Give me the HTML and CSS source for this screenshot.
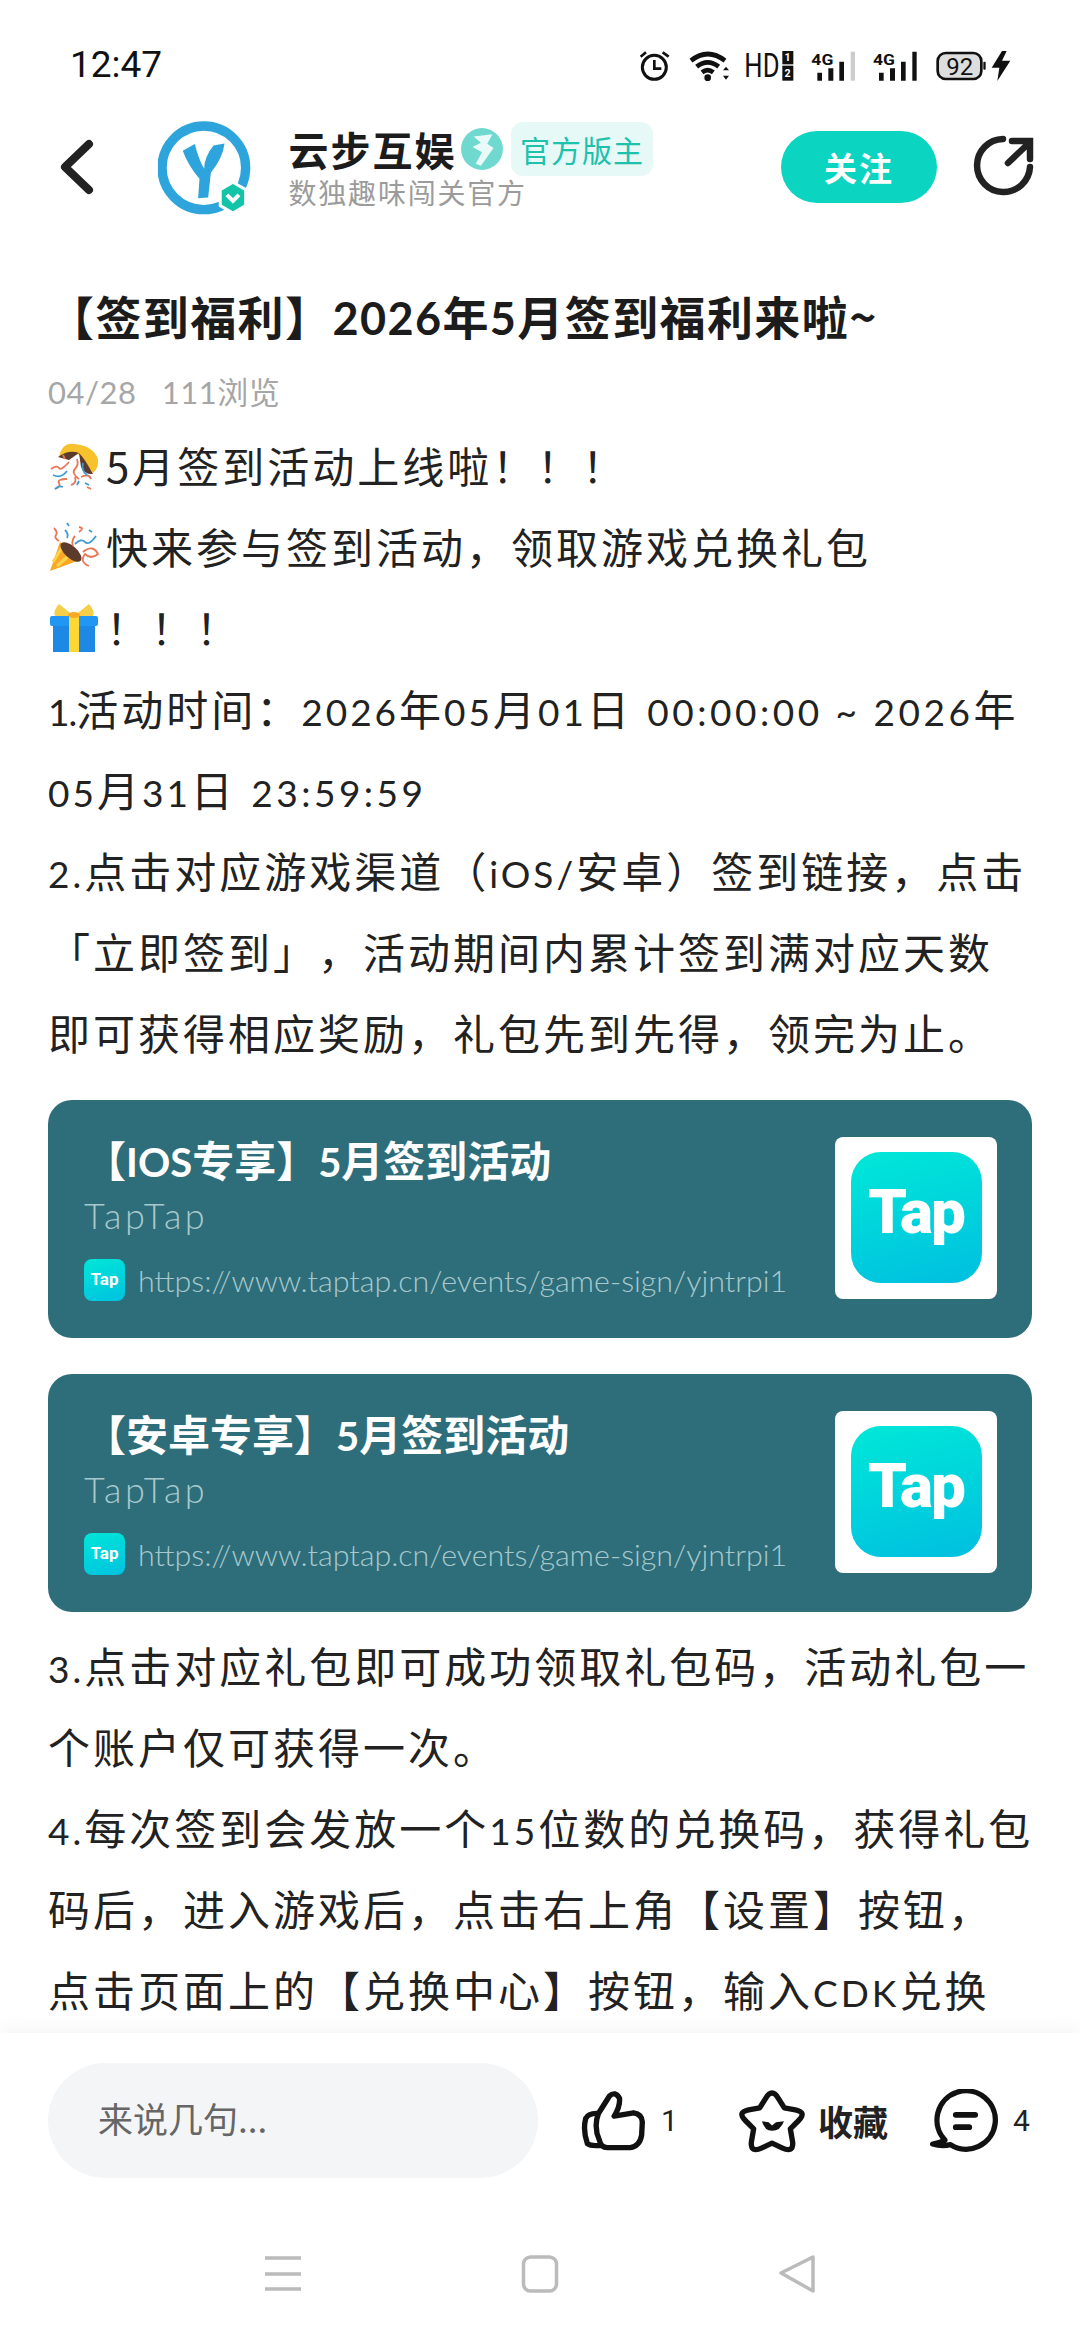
FILE: index.html
```html
<!DOCTYPE html>
<html lang="zh-CN">

<head>
    <meta charset="utf-8">
    <title>云步互娱</title>
    <link rel="stylesheet" href="styles.css">
</head>

<body>
    <div class="page">
        <!-- status bar -->
        <div class="status_bar">
            <span class="time">12:47</span>
            <svg class="status_icons" width="420" height="70" viewBox="0 0 1260 210">
                <circle cx="103" cy="112" r="36" fill="none" stroke="#111" stroke-width="9" />
                <path d="M103 90V116H124M62 80L78 67M128 67L146 80" fill="none" stroke="#111" stroke-width="8" />
                <path d="M213 92Q263 52 315 92M230 110Q263 84 296 110M246 127Q263 114 280 127" fill="none" stroke="#111" stroke-width="14" />
                <circle cx="263" cy="143" r="10" fill="#111" />
                <path d="M309 121L318 110L327 121ZM309 137L318 149L327 137Z" fill="#111" />
                <text class="st_hd" transform="translate(373 140) scale(0.77 1)">HD</text>
                <rect x="487" y="63" width="33" height="40" fill="#111" />
                <rect x="487" y="107" width="33" height="45" fill="#111" />
                <text class="st_sim" x="503" y="94">1</text>
                <text class="st_sim" x="503" y="142">2</text>
                <text class="st_net" x="574" y="106" textLength="66" lengthAdjust="spacingAndGlyphs">4G</text>
                <path d="M592 128h14v24h-14zM625 115h15v37h-15zM658 95h14v57h-14z" fill="#111" />
                <rect x="692" y="65" width="13" height="87" fill="#ccc" />
                <text class="st_net" x="759" y="106" textLength="66" lengthAdjust="spacingAndGlyphs">4G</text>
                <path d="M777 128h14v24h-14zM810 115h15v37h-15zM843 95h14v57h-14zM877 65h13v87h-13z" fill="#111" />
                <rect x="953" y="69" width="131" height="78" rx="24" fill="#ddd" stroke="#111" stroke-width="8" />
                <rect x="1090" y="95" width="7" height="24" rx="3" fill="#111" />
                <text class="st_batt" x="1019" y="134">92</text>
                <path d="M1146 63L1115 113H1138L1132 153L1171 92H1146L1160 63Z" fill="#111" />
            </svg>
        </div>

        <!-- header -->
        <div class="top_bar">
            <svg class="back_icon" width="34" height="56" viewBox="0 0 34 56">
                <path d="M29 5L5 28L29 51" fill="none" stroke="#222" stroke-width="8" stroke-linecap="round" stroke-linejoin="round" />
            </svg>
            <svg class="avatar" width="93" height="95" viewBox="48 60 278 284">
                <circle cx="185" cy="203" r="125" fill="none" stroke="#2ea4dc" stroke-width="28" />
                <path d="M122 152L158 132Q170 180 186 206Q186 170 214 136L247 130Q242 172 206 218L198 292L168 294L172 236Q138 196 122 152Z" fill="#2ea4dc" />
                <path d="M272 246L310 268V316L272 338L234 316V268Z" fill="#14c4a8" stroke="#fff" stroke-width="9" stroke-linejoin="round" />
                <path d="M254 284L272 302L290 284" fill="none" stroke="#fff" stroke-width="12" />
            </svg>
            <div class="author">
                <div class="author_line">
                    <span class="author_name">云步互娱</span>
                    <svg class="medal" width="42" height="44" viewBox="0 0 40 42">
                        <circle cx="20" cy="21" r="20" fill="#6fd9cf" />
                        <path d="M12 9L30 7L25 16L31 20L19 37L14 35L20 24L11 19L19 15Z" fill="#e8fbf8" />
                    </svg>
                    <span class="author_tag">官方版主</span>
                </div>
                <div class="author_sub">数独趣味闯关官方</div>
            </div>
            <div class="follow_btn">关注</div>
            <svg class="share_icon" width="64" height="64" viewBox="0 0 64 64">
                <path d="M31 4A26.500 26.500 0 1 0 58 32" fill="none" stroke="#222" stroke-width="6.500" stroke-linecap="round" />
                <path d="M36 28L57 8M40 6H58V24" fill="none" stroke="#222" stroke-width="6.500" stroke-linecap="round" />
            </svg>
        </div>

        <!-- article -->
        <div class="article">
            <h1 class="post_title">【签到福利】<span class="la_t">2026</span>年<span class="la_t">5</span>月签到福利来啦~</h1>
            <div class="post_meta">04/28&nbsp;&nbsp;&nbsp;111浏览</div>

            <p class="para">
                <svg class="emoji" width="50" height="50" viewBox="0 0 50 50">
                    <path d="M10 16Q13 1 26 3Q44 5 49 18Q50 27 44 32L36 21L29 13Z" fill="#f7c22c" />
                    <path d="M9 16Q20 8 30 12L20 19Z" fill="#5c3b2c" />
                    <path d="M30 12Q36 18 44 33Q36 34 32 26Z" fill="#5c3b2c" />
                    <path d="M2 28Q8 24 10 27T20 21M6 48Q12 46 10 42T18 38M28 18Q30 24 26 28T30 38M22 44Q28 42 26 36M32 36Q40 32 42 38M38 46L42 48M14 14L16 18" fill="none" stroke="#e8775a" stroke-width="1.800" />
                    <path d="M4 34Q12 38 18 30M34 22Q32 30 38 34M6 48Q10 44 14 46M28 44L30 40M36 42L40 44" fill="none" stroke="#3f9ad6" stroke-width="1.800" />
                </svg>5月签到活动上线啦！！！
            </p>
            <p class="para">
                <svg class="emoji" width="50" height="50" viewBox="0 0 50 50">
                    <path d="M1 49L11 20L31 38Z" fill="#f9a825" />
                    <path d="M4 40L14 24M8 44L23 31" stroke="#fbd34d" stroke-width="3" />
                    <ellipse cx="22" cy="30" rx="6" ry="13" transform="rotate(-48 22 30)" fill="#5c3b2c" />
                    <path d="M5 6Q9 10 7 13T10 19M26 14Q22 18 24 24M30 5Q36 6 30 10M34 30Q44 22 49 32Q42 38 36 32Q30 40 40 44" fill="none" stroke="#e8775a" stroke-width="1.800" />
                    <path d="M18 1L20 4M26 22Q32 16 36 20T47 14M40 8L43 10M16 8Q20 12 18 16" fill="none" stroke="#3f9ad6" stroke-width="1.800" />
                </svg>快来参与签到活动，领取游戏兑换礼包
            </p>
            <p class="para">
                <svg class="emoji" width="50" height="50" viewBox="0 0 50 50">
                    <path d="M25 13L10 1Q2 10 8 15ZM25 13L40 1Q48 10 42 15Z" fill="#f5cf4a" />
                    <rect x="4" y="22" width="42" height="27" fill="#1e88e5" />
                    <rect x="1" y="13" width="48" height="10" rx="2" fill="#2196f3" />
                    <rect x="20" y="12" width="10" height="37" fill="#fdd835" />
                    <ellipse cx="25" cy="12" rx="6" ry="3" fill="#f9a825" />
                </svg>！！！
            </p>
            <p class="para"><span class="la la_one">1.</span>活动时间：<span class="la">2026</span>年<span class="la">05</span>月<span class="la">01</span>日 <span class="la la_gap">00:00:00 ~ 2026</span>年</p>
            <p class="para"><span class="la">05</span>月<span class="la">31</span>日 <span class="la la_gap">23:59:59</span></p>
            <p class="para"><span class="la">2.</span>点击对应游戏渠道（<span class="la">iOS/</span>安卓）签到链接，点击</p>
            <p class="para">「立即签到」，活动期间内累计签到满对应天数</p>
            <p class="para">即可获得相应奖励，礼包先到先得，领完为止。</p>

            <div class="link_card first_card">
                <div class="card_text">
                    <div class="card_title">【<span class="la_c">IOS</span>专享】<span class="la_c">5</span>月签到活动</div>
                    <div class="card_site">TapTap</div>
                    <div class="card_link">
                        <span class="tap_small">Tap</span>
                        <span class="card_url">https://www.taptap.cn/events/game-sign/yjntrpi1</span>
                    </div>
                </div>
                <div class="card_thumb"><span class="tap_big">Tap</span></div>
            </div>

            <div class="link_card">
                <div class="card_text">
                    <div class="card_title">【安卓专享】<span class="la_c">5</span>月签到活动</div>
                    <div class="card_site">TapTap</div>
                    <div class="card_link">
                        <span class="tap_small">Tap</span>
                        <span class="card_url">https://www.taptap.cn/events/game-sign/yjntrpi1</span>
                    </div>
                </div>
                <div class="card_thumb"><span class="tap_big">Tap</span></div>
            </div>

            <p class="para"><span class="la">3.</span>点击对应礼包即可成功领取礼包码，活动礼包一</p>
            <p class="para">个账户仅可获得一次。</p>
            <p class="para"><span class="la">4.</span>每次签到会发放一个<span class="la">15</span>位数的兑换码，获得礼包</p>
            <p class="para">码后，进入游戏后，点击右上角【设置】按钮，</p>
            <p class="para">点击页面上的【兑换中心】按钮，输入<span class="la">CDK</span>兑换</p>
        </div>

        <!-- bottom bar -->
        <div class="bottom_bar">
            <div class="action_row">
                <div class="comment_input">来说几句...</div>
                <svg class="like_icon" width="67" height="62" viewBox="30 40 200 185">
                    <path d="M85 110Q55 108 47 125Q38 160 52 200Q62 208 92 205M85 110L118 58Q135 42 148 65Q150 90 132 118L190 108Q215 112 216 135L214 175Q208 208 180 212H112Q92 212 88 190Q70 150 85 110Z" fill="none" stroke="#111" stroke-width="16" stroke-linecap="round" stroke-linejoin="round" />
                </svg>
                <span class="like_count">1</span>
                <svg class="star_icon" width="70" height="67" viewBox="498 30 210 200">
                    <path d="M580 65Q600 30 620 65L637 92L670 98Q705 105 680 130L655 155L662 195Q665 228 630 212L600 198L570 212Q535 228 538 195L545 155L520 130Q495 105 530 98L563 92Z" fill="none" stroke="#111" stroke-width="16" stroke-linejoin="round" />
                    <path d="M570 132L590 135L600 145L612 135L636 132Q625 161 600 161Q578 161 570 132Z" fill="#111" />
                </svg>
                <span class="fav_text">收藏</span>
                <svg class="chat_icon" width="72" height="63" viewBox="325 40 215 190">
                    <path d="M375 194A88 88 0 1 1 392 208Q365 214 338 206Q354 204 375 194Z" fill="none" stroke="#111" stroke-width="16" stroke-linejoin="round" />
                    <path d="M408 118H466M408 155H448" fill="none" stroke="#111" stroke-width="18" stroke-linecap="round" />
                </svg>
                <span class="chat_count">4</span>
            </div>
            <div class="nav_row">
                <svg width="40" height="40" viewBox="0 0 40 40">
                    <path d="M2 4H38M2 20H38M2 35H38" fill="none" stroke="#bbb" stroke-width="3.500" />
                </svg>
                <svg width="40" height="40" viewBox="0 0 40 40">
                    <rect x="3.500" y="3" width="33" height="34" rx="7" fill="none" stroke="#bbb" stroke-width="3.500" />
                </svg>
                <svg width="40" height="40" viewBox="0 0 40 40">
                    <path d="M36 3V37L4 19Z" fill="none" stroke="#bbb" stroke-width="3.500" stroke-linejoin="round" />
                </svg>
            </div>
        </div>
    </div>
</body>

</html>
```

FILE: styles.css
```css
html,
body {
    margin: 0;
    padding: 0;
    background-color: #fff;
}

.page {
    display: flex;
    flex-direction: column;
    width: 1080px;
    height: 2340px;
    overflow: hidden;
    font-family: "Noto Sans CJK SC", sans-serif;
    text-spacing-trim: space-all;
    color: #222;
}

/* status bar */
.status_bar {
    display: flex;
    justify-content: space-between;
    flex-shrink: 0;
    height: 104px;
    padding: 30px 40px 0 70px;
    box-sizing: border-box;
}

.time {
    font-family: Roboto, sans-serif;
    font-size: 37px;
    line-height: 70px;
    color: #111;
}

.status_icons text {
    fill: #111;
    font-family: Roboto, sans-serif;
}

.st_hd {
    font-size: 100px;
}

.st_net {
    font-size: 46px;
    font-weight: 700;
}

.status_icons .st_sim {
    fill: #fff;
    font-size: 32px;
    font-weight: 700;
    text-anchor: middle;
}

.st_batt {
    font-size: 72px;
    text-anchor: middle;
}

/* header */
.top_bar {
    display: flex;
    align-items: center;
    flex-shrink: 0;
    height: 126px;
    padding-left: 60px;
}

.back_icon {
    margin-right: 64px;
}

.avatar {
    margin-right: 37.500px;
}

.author {
    width: 492.500px;
}

.author_line {
    display: flex;
    align-items: center;
    height: 56px;
}

.author_name {
    font-size: 40px;
    font-weight: 700;
    line-height: 44px;
    letter-spacing: 2px;
    color: #1c1c1c;
}

.medal {
    flex-shrink: 0;
    margin-left: 4.500px;
}

.author_tag {
    margin-left: 8px;
    padding: 0 9px;
    border-radius: 12px;
    background-color: #e6f9f7;
    color: #1dc1ac;
    font-size: 30px;
    line-height: 54px;
    letter-spacing: 1px;
}

.author_sub {
    padding-bottom: 6px;
    font-size: 28px;
    line-height: 30px;
    letter-spacing: 1.800px;
    color: #9b9b9b;
}

.follow_btn {
    width: 156px;
    height: 72px;
    border-radius: 36px;
    background-color: #0bd5c1;
    color: #fff;
    font-size: 33px;
    font-weight: 700;
    line-height: 72px;
    text-align: center;
    letter-spacing: 2px;
}

.share_icon {
    margin-left: 35px;
}

/* article */
.article {
    flex: 1;
    min-height: 0;
    overflow: hidden;
    padding: 55px 48px 0;
}

.post_title {
    margin: 0;
    font-size: 46px;
    font-weight: 700;
    line-height: 60px;
    letter-spacing: 1.400px;
    white-space: nowrap;
    color: #1c1c1c;
}

.la_t {
    font-family: Lato, sans-serif;
    font-size: 45px;
}

.post_meta {
    margin-top: 24px;
    font-family: Lato, "Noto Sans CJK SC", sans-serif;
    font-size: 31px;
    line-height: 40px;
    letter-spacing: 0.500px;
    color: #a6a6a6;
}

.para {
    height: 81px;
    margin: 0;
    font-size: 42px;
    line-height: 81px;
    letter-spacing: 3px;
    white-space: nowrap;
    color: #222;
}

.post_meta + .para {
    margin-top: 12px;
}

.la {
    font-family: Lato, sans-serif;
    font-size: 37px;
    line-height: 1;
}

.la_one {
    letter-spacing: -1px;
}

.la_gap {
    margin-left: 3px;
    letter-spacing: 3.500px;
}

.emoji {
    margin: 0 7px 0 1px;
    vertical-align: -8px;
}

/* link cards */
.link_card {
    display: flex;
    align-items: center;
    justify-content: space-between;
    height: 238px;
    margin-bottom: 36px;
    padding: 0 35px 0 36px;
    border-radius: 24px;
    box-sizing: border-box;
    background-color: #2d6e7a;
}

.first_card {
    margin-top: 28px;
}

.link_card + .para {
    margin-top: -24px;
}

.card_text {
    padding-bottom: 11px;
}

.card_title {
    margin-top: 2px;
    font-size: 42px;
    font-weight: 700;
    line-height: 60px;
    color: #fff;
    white-space: nowrap;
}

.la_c {
    font-family: Lato, sans-serif;
    font-size: 40px;
}

.card_site {
    margin-top: -2px;
    font-family: Lato, sans-serif;
    font-size: 36px;
    font-weight: 300;
    line-height: 50px;
    letter-spacing: 3.500px;
    color: #a9c8cd;
}

.card_link {
    display: flex;
    align-items: center;
    margin-top: 19px;
}

.tap_small {
    width: 41px;
    height: 42px;
    margin-right: 13px;
    border-radius: 8px;
    background: linear-gradient(160deg, #00e6d8, #00c2e0);
    color: #fff;
    font-family: Roboto, sans-serif;
    font-size: 17px;
    font-weight: 700;
    line-height: 40px;
    text-align: center;
}

.card_url {
    font-family: Lato, sans-serif;
    font-size: 30.400px;
    font-weight: 300;
    color: #a9c8cd;
    white-space: nowrap;
}

.card_thumb {
    display: flex;
    align-items: center;
    justify-content: center;
    width: 162px;
    height: 162px;
    margin-bottom: 3px;
    border-radius: 8px;
    background-color: #fff;
}

.tap_big {
    width: 131px;
    height: 131px;
    border-radius: 30px;
    background: linear-gradient(165deg, #00e8d8, #00bfe0);
    color: #fff;
    font-family: Roboto, sans-serif;
    font-size: 62px;
    font-weight: 900;
    line-height: 120px;
    letter-spacing: -2px;
    text-align: center;
}

/* bottom bar */
.bottom_bar {
    position: relative;
    flex-shrink: 0;
    height: 307px;
    padding: 30px 0 0 48px;
    box-sizing: border-box;
    background-color: #fff;
    box-shadow: 0 -6px 16px rgba(0, 0, 0, 0.04);
}

.action_row {
    display: flex;
    align-items: center;
    height: 115px;
}

.comment_input {
    width: 490px;
    height: 115px;
    margin-right: 42px;
    padding-left: 50px;
    border-radius: 58px;
    box-sizing: border-box;
    background-color: #f4f5f7;
    color: #666;
    font-size: 35px;
    line-height: 110px;
}

.like_count,
.chat_count {
    font-family: Roboto, sans-serif;
    font-size: 30px;
    color: #222;
}

.like_count {
    margin: 0 60px 0 14px;
}

.fav_text {
    margin: 0 40px 0 10px;
    font-size: 35px;
    font-weight: 700;
    color: #222;
}

.chat_count {
    margin-left: 13px;
}

.nav_row {
    display: flex;
    justify-content: center;
    gap: 217px;
    margin: 76px 0 0 -48px;
}
```
